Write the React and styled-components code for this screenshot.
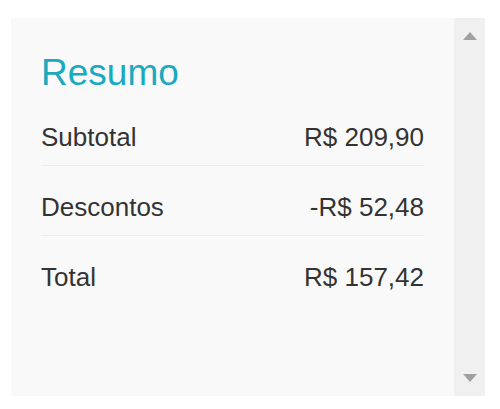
import React from "react";
import styled, { createGlobalStyle } from "styled-components";

const Global = createGlobalStyle`
  html, body { margin: 0; padding: 0; background: #ffffff; }
  body { font-family: "Liberation Sans", Arial, sans-serif; }
`;

const Page = styled.div`
  width: 500px;
  height: 409px;
  box-sizing: border-box;
  padding: 18px 15px 13px 11px;
`;

const Panel = styled.div`
  display: flex;
  height: 100%;
  background: #f9f9f9;
`;

const Content = styled.div`
  flex: 1;
  padding: 35px 30px 0 30px;
`;

const Title = styled.h2`
  margin: 0 0 3px 0;
  font-size: 37px;
  line-height: 40px;
  font-weight: 400;
  color: #1aa9bf;
`;

const Row = styled.div`
  display: flex;
  justify-content: space-between;
  align-items: baseline;
  padding: 26px 0 13px;
  font-size: 26px;
  line-height: 30px;
  color: #333333;
  border-bottom: ${(p) => (p.$last ? "none" : "1px solid #ececec")};
`;

const Track = styled.div`
  width: 31px;
  display: flex;
  flex-direction: column;
  justify-content: space-between;
  align-items: center;
  background: #f0f0f0;
  padding: 14px 0 14px;
`;

const Arrow = ({ down }) => (
  <svg width="14" height="8" viewBox="0 0 14 8">
    <polygon
      points={down ? "0,0 14,0 7,8" : "0,8 14,8 7,0"}
      fill="#a0a0a0"
    />
  </svg>
);

const rows = [
  ["Subtotal", "R$ 209,90"],
  ["Descontos", "-R$ 52,48"],
  ["Total", "R$ 157,42"],
];

export default function App() {
  return (
    <>
      <Global />
      <Page>
        <Panel>
          <Content>
            <Title>Resumo</Title>
            {rows.map(([label, value], i) => (
              <Row key={label} $last={i === rows.length - 1}>
                <span>{label}</span>
                <span>{value}</span>
              </Row>
            ))}
          </Content>
          <Track>
            <Arrow />
            <Arrow down />
          </Track>
        </Panel>
      </Page>
    </>
  );
}
